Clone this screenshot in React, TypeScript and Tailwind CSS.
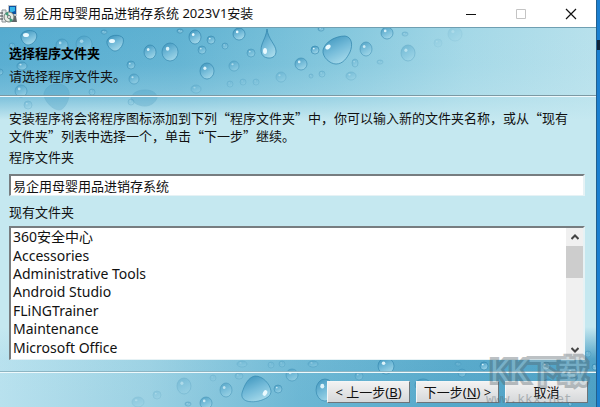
import { useState } from "react";

type DropItem = [cx: number, cy: number, rx: number, ry: number, opacity: number];

const folders = [
  "360安全中心",
  "Accessories",
  "Administrative Tools",
  "Android Studio",
  "FLiNGTrainer",
  "Maintenance",
  "Microsoft Office",
];

const topDrops: DropItem[] = [
  [62, 17, 6, 6, 0.6],
  [84, 16, 8, 8, 0.5],
  [104, 4, 3, 2, 0.7],
  [150, 24, 6, 7, 0.9],
  [170, 24, 8, 9, 0.9],
  [131, 37, 4, 4, 0.7],
  [134, 51, 5, 5, 0.6],
  [180, 3, 3, 2, 0.9],
  [195, 9, 6, 7, 1],
  [211, 12, 4, 4, 0.8],
  [202, 22, 4, 4, 0.7],
  [225, 18, 3, 3, 0.6],
  [239, 6, 6, 6, 1],
  [251, 25, 4, 4, 0.6],
  [207, 43, 7, 8, 0.9],
  [234, 38, 5, 5, 0.5],
  [196, 61, 5, 4, 0.3],
  [230, 56, 3, 3, 0.25],
  [243, 54, 3, 3, 0.25],
  [256, 54, 3, 3, 0.25],
  [281, 49, 5, 5, 0.3],
  [301, 36, 6, 6, 0.8],
  [315, 22, 4, 4, 0.9],
  [321, 1, 3, 2, 0.8],
  [366, 21, 6, 7, 0.7],
  [387, 5, 6, 6, 0.8],
  [405, 6, 3, 2, 0.4],
  [355, 35, 3, 4, 0.4],
  [380, 34, 3, 2, 0.3],
  [408, 25, 7, 8, 0.4],
  [351, 48, 5, 4, 0.3],
  [322, 46, 3, 3, 0.35],
  [311, 48, 2, 2, 0.35],
  [438, 15, 4, 4, 0.12],
  [455, 6, 7, 7, 0.15],
  [22, 38, 5, 4, 0.7],
  [12, 18, 3, 3, 0.5],
  [0, 44, 3, 3, 0.6],
  [21, 63, 6, 6, 0.6],
  [92, 64, 3, 3, 0.4],
  [28, 77, 4, 4, 0.3],
  [131, 74, 3, 3, 0.3],
];

const bottomDrops: DropItem[] = [
  [138, 75, 6, 5, 0.2],
  [157, 68, 4, 4, 0.2],
  [184, 59, 7, 8, 0.3],
  [188, 77, 3, 2, 0.5],
  [206, 76, 6, 6, 0.7],
  [213, 51, 3, 3, 0.2],
  [226, 63, 6, 7, 0.6],
  [239, 49, 4, 3, 0.3],
  [242, 37, 5, 3, 0.25],
  [271, 38, 3, 3, 0.25],
  [282, 37, 3, 3, 0.3],
  [278, 62, 4, 4, 0.7],
  [292, 48, 6, 6, 0.6],
  [313, 37, 5, 3, 0.4],
  [325, 63, 9, 11, 0.9],
  [359, 49, 4, 4, 0.4],
  [386, 39, 8, 8, 0.9],
  [423, 58, 8, 6, 0.8],
  [458, 37, 3, 2, 0.3],
  [462, 46, 4, 4, 0.5],
  [484, 39, 4, 4, 0.9],
  [546, 39, 4, 4, 0.9],
  [548, 56, 4, 4, 0.8],
  [572, 46, 6, 5, 0.8],
  [588, 27, 3, 3, 0.4],
  [595, 40, 3, 3, 0.8],
  [570, 77, 2, 2, 0.8],
];

const Drop = ({ item }: { item: DropItem }) => {
  const [cx, cy, rx, ry, opacity] = item;
  return (
    <g opacity={opacity}>
      <ellipse
        cx={cx}
        cy={cy}
        rx={rx}
        ry={ry}
        fill="url(#drop)"
        stroke="#2f83ab"
        strokeOpacity="0.65"
      />
      <ellipse
        cx={cx - rx * 0.3}
        cy={cy - ry * 0.35}
        rx={rx * 0.22}
        ry={ry * 0.22}
        fill="#eafaff"
      />
    </g>
  );
};

const TopWater = () => (
  <svg
    className="absolute inset-x-0 top-0 h-[92px] w-full"
    viewBox="0 0 596 92"
    preserveAspectRatio="xMinYMin slice"
    aria-hidden="true"
  >
    <defs>
      <linearGradient id="topSide">
        <stop offset="0" stopColor="#54abd0" />
        <stop offset="0.3" stopColor="#60b2d2" />
        <stop offset="0.55" stopColor="#80c5dc" />
        <stop offset="0.78" stopColor="#a4d8e7" />
        <stop offset="1" stopColor="#b8e1ec" />
      </linearGradient>
      <linearGradient id="topFade" x1="0" y1="0" x2="0" y2="1">
        <stop offset="0" stopColor="#c5e8f0" stopOpacity="0" />
        <stop offset="0.4" stopColor="#c5e8f0" stopOpacity="0.06" />
        <stop offset="0.72" stopColor="#c5e8f0" stopOpacity="0.3" />
        <stop offset="1" stopColor="#c5e8f0" />
      </linearGradient>
      <linearGradient id="drop" x1="0.2" y1="0" x2="0.7" y2="1">
        <stop offset="0" stopColor="#3f96be" />
        <stop offset="0.5" stopColor="#74bbd9" />
        <stop offset="1" stopColor="#a9dcec" />
      </linearGradient>
    </defs>
    <rect width="596" height="92" fill="url(#topSide)" />
    <rect width="596" height="92" fill="url(#topFade)" />
    <g fill="#3f96be" stroke="#2f83ab" strokeOpacity="0.8" opacity="0.25">
      <path d="M44 66c1-6 6-10 13-10 8 0 13 5 12 12-1 6-5 14-10 14-6 0-15-9-15-16z" />
      <path d="M131 70c2-6 8-8 14-8 7 0 12 3 12 8-2 5-7 8-12 8-6 0-12-3-14-8z" />
    </g>
    {topDrops.map((item, i) => (
      <Drop key={i} item={item} />
    ))}
    <g fill="url(#drop)" stroke="#2f83ab" strokeOpacity="0.7">
      <path d="M21 7c2-5 12-6 15-2 3 5-3 12-8 12-4 0-8-6-7-10z" />
      <path d="M107 13c2-7 13-7 16-3 2 5-3 13-8 13-4 0-9-6-8-10z" />
      <path d="M267 1c1 10 9 16 9 22 0 5-3 7-7 7-5 0-8-3-8-8 0-7 5-12 6-21z" />
      <path d="M323 22c2-8 12-14 22-14 7 1 8 9 5 16-3 6-7 12-14 12-6 0-14-7-13-14z" />
    </g>
    <g fill="#eafaff">
      <ellipse cx="26" cy="7" rx="3" ry="2" />
      <ellipse cx="112" cy="13" rx="3" ry="2" />
      <ellipse cx="265" cy="23" rx="2" ry="3" />
      <ellipse cx="328" cy="19" rx="3" ry="2" transform="rotate(-35 328 19)" />
    </g>
  </svg>
);

const BottomWater = () => (
  <svg
    className="absolute inset-x-0 bottom-0 h-[80px] w-full"
    viewBox="0 0 596 80"
    preserveAspectRatio="xMinYMax slice"
    aria-hidden="true"
  >
    <defs>
      <linearGradient id="bottomSide">
        <stop offset="0" stopColor="#b8e1ee" />
        <stop offset="0.25" stopColor="#9bd1e3" />
        <stop offset="0.5" stopColor="#6cb7d4" />
        <stop offset="0.75" stopColor="#55a8ca" />
        <stop offset="1" stopColor="#4c9fc4" />
      </linearGradient>
      <linearGradient id="bottomFade" x1="0" y1="0" x2="0" y2="1">
        <stop offset="0" stopColor="#c5e8f0" />
        <stop offset="0.4" stopColor="#c5e8f0" stopOpacity="0.05" />
        <stop offset="1" stopColor="#c5e8f0" stopOpacity="0" />
      </linearGradient>
    </defs>
    <rect width="596" height="80" fill="url(#bottomSide)" />
    <rect width="596" height="80" fill="url(#bottomFade)" />
    {bottomDrops.map((item, i) => (
      <Drop key={i} item={item} />
    ))}
    <path
      d="M242 66c2-7 6-16 13-17 8 0 15 8 16 15 0 5-4 7-9 9-8 3-22 3-20-7z"
      fill="url(#drop)"
      stroke="#2f83ab"
      strokeOpacity="0.6"
    />
    <ellipse cx="265" cy="66" rx="2" ry="3" fill="#eafaff" transform="rotate(30 265 66)" />
  </svg>
);

const SetupIcon = () => (
  <svg className="h-[18px] w-[18px]" viewBox="0 0 18 18" aria-hidden="true">
    <path d="M8 0h9v11H8z" fill="#c3c8cc" />
    <path d="M9 1h7v8H9z" fill="#0d4f9e" />
    <path d="M10 2h5v4l-5 2z" fill="#35b5e8" />
    <path d="M10 11h6l1 6h-6z" fill="#5f6468" />
    <path d="M2 5h4v12H2z" fill="#e4e7e8" stroke="#8d9397" />
    <path d="M0 8h3M0 11h3M0 14h3" stroke="#3c4246" />
    <circle cx="9" cy="12" r="5" fill="#e6ebe4" stroke="#707a76" />
    <path d="M9 12L5 9a5 5 0 0 1 3-2zM9 12l4 3a5 5 0 0 1-3 2z" fill="#3f9c7c" />
    <circle cx="9" cy="12" r="1.5" fill="#fff" stroke="#707a76" />
  </svg>
);

const TitleBar = () => (
  <div className="flex h-[27px] items-center bg-white">
    <SetupIcon />
    <h1 className="flex-1 pb-px pl-[5px]">易企用母婴用品进销存系统 2023V1安装</h1>
    <button aria-label="最小化" className="flex h-full w-[50px] items-center justify-center">
      <svg className="h-3 w-3" viewBox="0 0 12 12" stroke="#111">
        <path d="M1 6.5h10" />
      </svg>
    </button>
    <button
      aria-label="最大化"
      disabled
      className="flex h-full w-[50px] items-center justify-center"
    >
      <svg className="h-3 w-3" viewBox="0 0 12 12" fill="none" stroke="#c4c4c4">
        <path d="M1.500 1.500h9v9h-9z" />
      </svg>
    </button>
    <button aria-label="关闭" className="flex h-full w-[50px] items-center justify-center">
      <svg className="h-3 w-3" viewBox="0 0 12 12" stroke="#111" strokeWidth="1.2">
        <path d="M1 1l10 10M11 1L1 11" />
      </svg>
    </button>
  </div>
);

const FolderList = () => {
  const [selected, setSelected] = useState("");

  return (
    <div className="mt-[5px] flex flex-1 border-t-2 border-r-2 border-b border-l-2 border-t-[#777d80] border-r-[#e6f2f5] border-b-[#e6f2f5] border-l-[#777d80] bg-white">
      <ul
        role="listbox"
        aria-labelledby="existing"
        className="flex flex-1 flex-col pb-[2px] pl-0.5 text-sm leading-[18px]"
      >
        {folders.map((name) => (
          <li
            key={name}
            role="option"
            aria-selected={selected === name}
            onClick={() => setSelected(name)}
            className="flex flex-1 items-center"
          >
            {name}
          </li>
        ))}
      </ul>
      <div className="flex w-[17px] flex-col bg-[#f0f0f0]">
        <button aria-label="向上滚动" className="flex h-[18px] items-center justify-center">
          <svg className="h-2 w-2" viewBox="0 0 8 8" fill="none" stroke="#444" strokeWidth="2">
            <path d="M0.500 6L4 2.500L7.500 6" />
          </svg>
        </button>
        <div className="h-8 bg-[#cdcdcd]" />
        <div className="flex-1" />
        <button aria-label="向下滚动" className="flex h-[18px] items-center justify-center">
          <svg className="h-2 w-2" viewBox="0 0 8 8" fill="none" stroke="#444" strokeWidth="2">
            <path d="M0.500 2L4 5.500L7.500 2" />
          </svg>
        </button>
      </div>
    </div>
  );
};

const buttonClass =
  "h-[22px] w-[83px] border border-t-[#f4f6f7] border-l-[#f4f6f7] border-r-[#6d7478] border-b-[#6d7478] bg-linear-to-b from-[#f2f2f2] to-[#d6d8da] whitespace-pre";

export default function App() {
  const [folder, setFolder] = useState("易企用母婴用品进销存系统");

  return (
    <div
      lang="zh-CN"
      className="flex min-h-screen bg-[#1b7fd0] font-['Noto_Sans','Noto_Sans_CJK_SC',sans-serif] text-[13px] leading-[18px] text-[#111]"
    >
      <div className="flex flex-1 flex-col border-r border-[#22608f] bg-[#c5e8f0]">
        <TitleBar />
        <div className="relative flex flex-1 flex-col border-t border-[#6f9fb2]">
          <TopWater />
          <BottomWater />

          <header className="relative border-b border-[#7c99a3] px-[9px] pt-4 pb-[10px]">
            <h2 className="font-bold text-black">选择程序文件夹</h2>
            <p className="mt-[5px]">请选择程序文件夹。</p>
          </header>

          <main className="relative flex flex-1 flex-col border-t border-b border-t-[#eef9fc] border-b-[#8db5c3] pt-3 pr-[11px] pb-[11px] pl-[9px]">
            <p className="pr-4 font-['Noto_Sans_CJK_SC',sans-serif]">
              安装程序将会将程序图标添加到下列“程序文件夹”中，你可以输入新的文件夹名称，或从“现有文件夹”列表中选择一个，单击“下一步”继续。
            </p>
            <label htmlFor="folder" className="mt-[3px]">
              程序文件夹
            </label>
            <input
              id="folder"
              value={folder}
              onChange={(e) => setFolder(e.target.value)}
              className="mt-2 h-[22px] border-t-2 border-r-2 border-b border-l-2 border-t-[#777d80] border-r-[#e6f2f5] border-b-[#e6f2f5] border-l-[#777d80] bg-white pb-px pl-0.5 outline-none"
            />
            <span id="existing" className="mt-[7px]">
              现有文件夹
            </span>
            <FolderList />
          </main>

          <footer className="relative flex justify-end gap-[6px] border-t border-[#eef9fc] pt-2 pr-2 pb-1">
            <button className={buttonClass}>
              {"< "}上一步(<u>B</u>)
            </button>
            <button className={buttonClass}>
              下一步(<u>N</u>){" >"}
            </button>
            <button className={buttonClass}>取消</button>
          </footer>

          <div
            className="pointer-events-none absolute right-2 bottom-0 text-[#59676e] opacity-40"
            aria-hidden="true"
          >
            <p className="pl-1 text-[30px] leading-7 font-medium text-[#a9bcc4] [-webkit-text-stroke:6px_#59676e] [paint-order:stroke_fill]">
              KK下载
            </p>
            <p className="pt-2 font-['Liberation_Mono',monospace] text-[13px] leading-[14px]">
              www.kkx.net
            </p>
          </div>
        </div>
      </div>
      <div className="w-[3px] pt-10">
        <div className="h-[10px] bg-[#10243a]" />
      </div>
    </div>
  );
}
